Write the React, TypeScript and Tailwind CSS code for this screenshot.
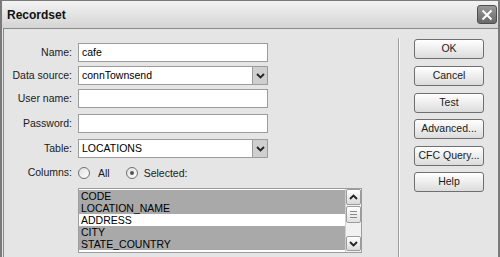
import React from 'react';

const font = { fontFamily: '"Liberation Sans", Arial, sans-serif' };

function Chevron({ up = false }: { up?: boolean }) {
  return (
    <svg width="9" height="6" viewBox="0 0 9 6" className={up ? 'rotate-180' : ''}>
      <path d="M1 1 L4.5 4.5 L8 1" fill="none" stroke="#222" strokeWidth="1.8" />
    </svg>
  );
}

function Field({ label, value = '', select = false, className = '' }: { label: string; value?: string; select?: boolean; className?: string }) {
  return (
    <div className={`flex items-center h-[19px] ${className}`}>
      <div className="w-[69px] text-right pr-[1px] text-[10.5px] text-[#1a1a1a]">{label}</div>
      <div className="ml-[5px] w-[190px] h-full bg-white border border-[#9c9c9c] flex items-center">
        <span className="flex-1 pl-[3px] text-[10.5px] text-black leading-none">{value}</span>
        {select && (
          <div className="w-[15px] h-[17px] bg-[#cfcfcf] border-l border-[#9c9c9c] flex items-center justify-center">
            <Chevron />
          </div>
        )}
      </div>
    </div>
  );
}

function Btn({ label, className = '' }: { label: string; className?: string }) {
  return (
    <button className={`w-[70px] h-[20px] rounded-[3px] border border-[#6f6f6f] bg-gradient-to-b from-white to-[#dcdcdc] text-[10.5px] text-[#1a1a1a] flex items-center justify-center ${className}`}>
      {label}
    </button>
  );
}

function Radio({ checked = false }: { checked?: boolean }) {
  return (
    <div className="w-[12px] h-[12px] rounded-full border border-[#6f6f6f] bg-gradient-to-br from-[#e0e0e0] to-white flex items-center justify-center">
      {checked && <div className="w-[4px] h-[4px] rounded-full bg-[#555]" />}
    </div>
  );
}

const columns = [
  { name: 'CODE', sel: true },
  { name: 'LOCATION_NAME', sel: true },
  { name: 'ADDRESS', sel: false },
  { name: 'CITY', sel: true },
  { name: 'STATE_COUNTRY', sel: true },
];

export default function App() {
  return (
    <div style={font} className="w-[500px] h-[257px] overflow-hidden bg-[#e5e5e5] border-x-[2px] border-t border-[#7a7a7a] flex flex-col">
      {/* Title bar */}
      <div className="h-[27px] shrink-0 bg-gradient-to-b from-[#f3f3f3] to-[#d4d4d4] flex items-center justify-between pl-[5px] pr-[1px]">
        <span className="text-[12px] font-bold text-[#111]">Recordset</span>
        <div className="w-[20px] h-[19px] rounded-[3px] border border-[#4f4f4f] bg-gradient-to-b from-[#9a9a9a] to-[#6a6a6a] flex items-center justify-center">
          <svg width="12" height="12" viewBox="0 0 12 12">
            <path d="M1.5 1.5 L10.5 10.5 M10.5 1.5 L1.5 10.5" stroke="white" strokeWidth="2" />
          </svg>
        </div>
      </div>

      {/* Body */}
      <div className="flex-1 flex border-t border-l border-[#8a8a8a] ml-[1px]">
        {/* Form */}
        <div className="w-[394px] pt-[14px] flex flex-col">
          <Field label="Name:" value="cafe" />
          <Field label="Data source:" value="connTownsend" select className="mt-[4px]" />
          <Field label="User name:" className="mt-[4px]" />
          <Field label="Password:" className="mt-[6px]" />
          <Field label="Table:" value="LOCATIONS" select className="mt-[6px]" />

          <div className="flex items-center h-[14px] mt-[8px]">
            <div className="w-[69px] text-right pr-[1px] text-[10.5px] text-[#1a1a1a]">Columns:</div>
            <div className="ml-[5px] flex items-center">
              <Radio />
              <span className="ml-[8px] mt-[2px] text-[10.5px] text-[#1a1a1a]">All</span>
              <div className="ml-[16px]"><Radio checked /></div>
              <span className="ml-[6px] mt-[2px] text-[10.5px] text-[#1a1a1a]">Selected:</span>
            </div>
          </div>

          <div className="ml-[74px] mt-[8px] w-[284px] h-[65px] border border-[#9c9c9c] bg-white flex">
            <div className="flex-1 flex flex-col pt-[1px]">
              {columns.map((c) => (
                <div key={c.name} className={`h-[12px] pl-[2px] text-[10.5px] leading-[12px] text-black ${c.sel ? 'bg-[#a9a9a9]' : 'bg-white'}`}>
                  {c.name}
                </div>
              ))}
            </div>
            <div className="w-[16px] bg-[#f1f1f1] border-l border-[#d0d0d0] flex flex-col justify-between">
              <div>
                <div className="h-[16px] border border-[#9c9c9c] rounded-[2px] bg-gradient-to-b from-white to-[#dadada] flex items-center justify-center">
                  <Chevron up />
                </div>
                <div className="h-[17px] mt-[1px] border border-[#9c9c9c] rounded-[2px] bg-gradient-to-b from-white to-[#e0e0e0] flex flex-col items-center justify-center gap-[2px]">
                  <div className="w-[7px] h-px bg-[#8a8a8a]" />
                  <div className="w-[7px] h-px bg-[#8a8a8a]" />
                  <div className="w-[7px] h-px bg-[#8a8a8a]" />
                </div>
              </div>
              <div className="h-[15px] mb-[1px] border border-[#9c9c9c] rounded-[2px] bg-gradient-to-b from-white to-[#dadada] flex items-center justify-center">
                <Chevron />
              </div>
            </div>
          </div>
        </div>

        {/* Buttons */}
        <div className="mt-[9px] flex-1 border-l border-[#a0a0a0] shadow-[inset_1px_0_0_#f8f8f8] pl-[15px] pt-[1px] flex flex-col">
          <Btn label="OK" />
          <Btn label="Cancel" className="mt-[7px]" />
          <Btn label="Test" className="mt-[7px]" />
          <Btn label="Advanced..." className="mt-[6px]" />
          <Btn label="CFC Query..." className="mt-[7px]" />
          <Btn label="Help" className="mt-[6px]" />
        </div>
      </div>
    </div>
  );
}
